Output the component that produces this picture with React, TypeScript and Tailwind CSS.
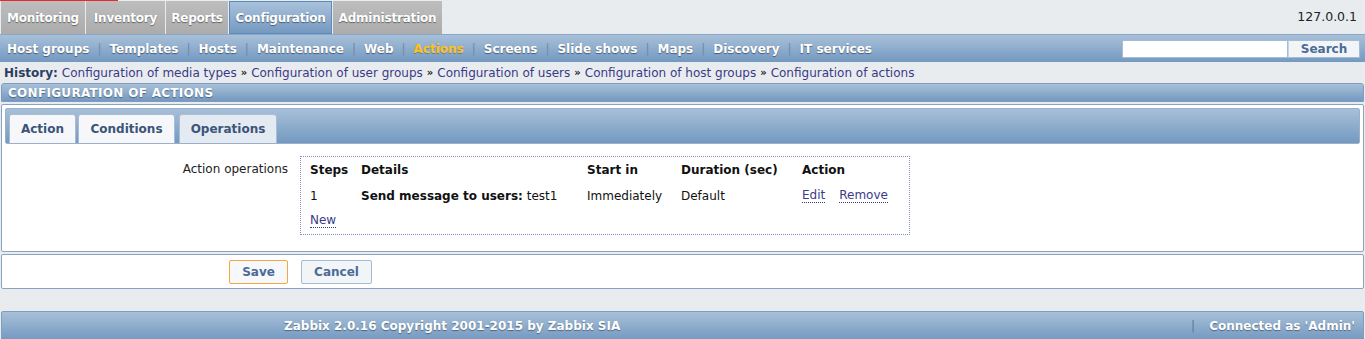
import React from "react";

const F = { fontFamily: "'DejaVu Sans', Verdana, sans-serif" };

const mainTabs = [
  { t: "Monitoring", w: "w-[84px]" },
  { t: "Inventory", w: "w-[79px]" },
  { t: "Reports", w: "w-[62px]" },
  { t: "Configuration", w: "w-[103px]", active: true },
  { t: "Administration", w: "w-[109px]" },
];

const subItems = [
  "Host groups",
  "Templates",
  "Hosts",
  "Maintenance",
  "Web",
  "Actions",
  "Screens",
  "Slide shows",
  "Maps",
  "Discovery",
  "IT services",
];

const history = [
  "Configuration of media types",
  "Configuration of user groups",
  "Configuration of users",
  "Configuration of host groups",
  "Configuration of actions",
];

const shadow = "[text-shadow:0_1px_1px_rgba(0,0,0,0.45)]";

export default function App() {
  return (
    <div className="w-[1365px] h-[339px] bg-[#e9ecef] text-[12px] text-black overflow-hidden relative" style={F}>
      <div className="absolute left-0 top-0 w-[118px] h-px bg-[#e8282a]" />
      {/* top row */}
      <div className="flex items-stretch h-[34px] pt-px">
        <div className="flex gap-px pl-px">
          {mainTabs.map((m) => (
            <div
              key={m.t}
              className={`${m.w} flex items-center justify-center font-bold text-[12px] tracking-[-0.2px] text-white ${shadow} ${
                m.active
                  ? "bg-gradient-to-b from-[#a9c2db] to-[#7599c1] border border-[#5b8abb]"
                  : "bg-gradient-to-b from-[#bdbdbd] to-[#acacac]"
              }`}
            >
              {m.t}
            </div>
          ))}
        </div>
        <div className="flex-1" />
        <div className="flex items-center pr-[8px] pb-[1px] text-[12.5px] text-[#222]">127.0.0.1</div>
      </div>
      {/* sub menu */}
      <div className="h-[28px] flex items-center bg-gradient-to-b from-[#a8c0d8] to-[#7499c1] border-t border-[#8aa7c9] pl-[7px] pr-[5px]">
        <div className="flex items-center font-bold text-[12px]">
          {subItems.map((s, i) => (
            <React.Fragment key={s}>
              {i > 0 && <span className="text-[#6f88a8] font-normal px-[8px]">|</span>}
              <span className={s === "Actions" ? "text-[#ffc21a] [text-shadow:0_1px_0_rgba(0,0,0,0.25)]" : `text-white ${shadow}`}>{s}</span>
            </React.Fragment>
          ))}
        </div>
        <div className="flex-1" />
        <div className="flex items-center h-[18px]">
          <div className="w-[166px] h-[18px] bg-white border border-[#a6bcd4]" />
          <div className="w-[72px] h-[18px] bg-[#f2f5f8] border border-[#a6bcd4] border-l-[#c6d4e3] flex items-center justify-center font-bold text-[12px] text-[#4b6b96]">
            Search
          </div>
        </div>
      </div>
      {/* history */}
      <div className="h-[21px] flex items-center pl-[4px] text-[12px] text-[#3a3a88]">
        <span className="font-bold text-[#2c3f60] mr-[4px]">History:</span>
        {history.map((h, i) => (
          <React.Fragment key={h}>
            {i > 0 && <span className="text-[#222] font-bold px-[4px] text-[10px]">»</span>}
            <span>{h}</span>
          </React.Fragment>
        ))}
      </div>
      {/* header */}
      <div className="mx-px h-[19px] rounded-t-[3px] bg-gradient-to-b from-[#a8c0d8] to-[#7499c1] border border-[#7f9cbf] flex items-center pl-[6px] font-bold text-[12px] tracking-[0.3px] text-white [text-shadow:0_1px_1px_rgba(0,0,0,0.4)]">
        CONFIGURATION OF ACTIONS
      </div>
      {/* content */}
      <div className="mx-px mt-[2px] h-[148px] bg-white border border-[#8aa3c3] rounded-[2px] px-[3px] pt-[3px]">
        <div className="h-[36px] border border-[#9ab0cb] rounded-[2px] bg-gradient-to-b from-[#a8c0d8] to-[#7499c1] flex items-end pl-[3px] gap-[2px]">
          {[
            { t: "Action", w: "w-[67px]" },
            { t: "Conditions", w: "w-[97px]" },
            { t: "Operations", w: "w-[98px]", active: true },
          ].map((tb) => (
            <div
              key={tb.t}
              className={`${tb.w} h-[29px] rounded-t-[3px] border border-b-0 border-[#a9bdd4] flex items-center justify-center font-bold text-[12px] text-[#3b5478] ${
                tb.active ? "bg-[#e3eaf2] ml-[2px]" : "bg-[#f5f7fa]"
              }`}
            >
              {tb.t}
            </div>
          ))}
        </div>
        <div className="flex pt-[12px]">
          <div className="w-[284px] text-right pr-[1px] pt-[4px] text-[12px] text-[#222]">Action operations</div>
          <div className="ml-[11px] w-[610px] h-[79px] border border-dotted border-[#8393c9] px-[9px] pt-[6px] text-[12px] text-[#111]">
            <div className="flex font-bold h-[14px] items-center">
              <div className="w-[51px]">Steps</div>
              <div className="w-[226px]">Details</div>
              <div className="w-[94px]">Start in</div>
              <div className="w-[121px]">Duration (sec)</div>
              <div>Action</div>
            </div>
            <div className="flex h-[14px] items-center mt-[12px]">
              <div className="w-[51px]">1</div>
              <div className="w-[226px]">
                <span className="font-bold">Send message to users:</span> test1
              </div>
              <div className="w-[94px]">Immediately</div>
              <div className="w-[121px]">Default</div>
              <div className="flex gap-[14px] text-[#3b3b88]">
                <span className="border-b border-dotted border-[#3b3b88] leading-[13px]">Edit</span>
                <span className="border-b border-dotted border-[#3b3b88] leading-[13px]">Remove</span>
              </div>
            </div>
            <div className="mt-[8px] text-[#3b3b88]">
              <span className="border-b border-dotted border-[#3b3b88] leading-[13px] inline-block">New</span>
            </div>
          </div>
        </div>
      </div>
      {/* buttons */}
      <div className="mx-px mt-[2px] h-[35px] bg-white border border-[#8aa3c3] rounded-[2px] flex items-center pl-[227px] gap-[13px]">
        <div className="w-[59px] h-[24px] border border-[#f3a73f] rounded-[2px] bg-[#f6f8fb] flex items-center justify-center font-bold text-[12px] text-[#4b6b96]">
          Save
        </div>
        <div className="w-[71px] h-[24px] border border-[#a6bcd4] rounded-[2px] bg-[#f2f5f8] flex items-center justify-center font-bold text-[12px] text-[#4b6b96]">
          Cancel
        </div>
      </div>
      {/* footer */}
      <div className="mx-px mt-[22px] h-[30px] rounded-t-[2px] border border-[#7f9cbf] bg-gradient-to-b from-[#a8c0d8] to-[#7499c1] flex items-center font-bold text-[12px] text-white [text-shadow:0_1px_1px_rgba(0,0,0,0.4)]">
        <div className="pl-[282px]">Zabbix 2.0.16 Copyright 2001-2015 by Zabbix SIA</div>
        <div className="flex-1" />
        <span className="text-[#5a76a0] font-normal [text-shadow:none] mr-[14px]">|</span>
        <div className="pr-[8px]">Connected as 'Admin'</div>
      </div>
    </div>
  );
}
